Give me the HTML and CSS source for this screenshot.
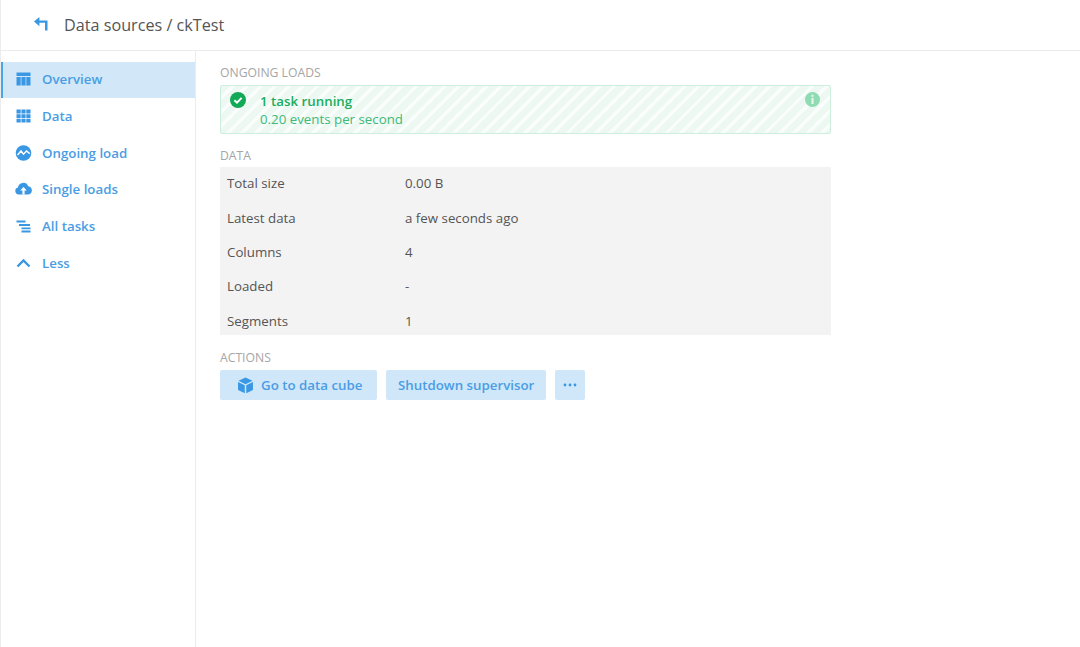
FILE: index.html
```html
<!DOCTYPE html>
<html lang="en">
<head>
<meta charset="utf-8">
<title>Data sources / ckTest</title>
<link rel="stylesheet" href="styles.css">
</head>
<body>
<div class="app">
  <header class="topbar">
    <svg class="back" viewBox="0 0 14 14" width="14" height="14"><path d="M0 4.6 5.4 0v3.5H13.5V13.5H11V5.8H5.4V9.2z" fill="#3a97e4"/></svg>
    <h1 class="crumb">Data sources / ckTest</h1>
  </header>
  <div class="body">
    <nav class="side">
      <a class="item active"><svg class="ico" viewBox="0 0 16 16"><path d="M1 1.5h14v3.5H1zM1 6h4.2v8.5H1zM5.9 6h4.2v8.5H5.9zM10.8 6H15v8.5h-4.2z"/></svg><span>Overview</span></a>
      <a class="item"><svg class="ico" viewBox="0 0 16 16"><path d="M1 1.5h4.2v4H1zM5.9 1.5h4.2v4H5.9zM10.8 1.5H15v4h-4.2zM1 6.2h4.2v3.8H1zM5.9 6.2h4.2v3.8H5.9zM10.8 6.2H15v3.8h-4.2zM1 10.7h4.2v3.8H1zM5.9 10.7h4.2v3.8H5.9zM10.8 10.7H15v3.8h-4.2z"/></svg><span>Data</span></a>
      <a class="item"><svg class="ico" viewBox="0 0 16 16"><circle cx="8" cy="8" r="7.8"/><path d="M2 10 5.5 6 8 9.2 11 6l3.2 2.6" fill="none" stroke="#fff" stroke-width="1.5"/></svg><span>Ongoing load</span></a>
      <a class="item"><svg class="ico" viewBox="0 0 17 16"><path d="M3.6 13.5a3.5 3.5 0 0 1-.6-6.9A5.3 5.3 0 0 1 13.2 5.2a4.2 4.2 0 0 1 .2 8.3z"/><path d="M8.5 6 5.2 9.6h2.2v3.9h2.2V9.6h2.2z" fill="#fff"/></svg><span>Single loads</span></a>
      <a class="item"><svg class="ico" viewBox="0 0 16 16"><path d="M1 2.5h9v2H1zM3.5 6h11v2h-11zM6 9.5h9v1.8H6zM6 12.6h9v1.8H6z"/></svg><span>All tasks</span></a>
      <a class="item"><svg class="ico" viewBox="0 0 16 16"><path d="M2 11.5 8 5.5l6 6" fill="none" stroke="#3a97e4" stroke-width="2.4"/></svg><span>Less</span></a>
    </nav>
    <main class="main">
      <section class="sec">
        <div class="label">ONGOING LOADS</div>
        <div class="status">
          <svg class="check" viewBox="0 0 16 16" width="16" height="16"><circle cx="8" cy="8" r="8" fill="#0fa958"/><path d="M4.4 8.2 7 10.7l4.6-4.8" fill="none" stroke="#fff" stroke-width="2"/></svg>
          <div class="status-text">
            <div class="st1">1 task running</div>
            <div class="st2">0.20 events per second</div>
          </div>
          <svg class="info" viewBox="0 0 16 16" width="15" height="15"><circle cx="8" cy="8" r="8" fill="#8fdcb2"/><rect x="6.9" y="3" width="2.2" height="2.2" fill="#eaf7f0"/><rect x="6.9" y="6.4" width="2.2" height="6.4" fill="#eaf7f0"/></svg>
        </div>
      </section>
      <section class="sec data">
        <div class="label">DATA</div>
        <div class="table">
          <div class="row"><span class="key">Total size</span><span>0.00 B</span></div>
          <div class="row"><span class="key">Latest data</span><span>a few seconds ago</span></div>
          <div class="row"><span class="key">Columns</span><span>4</span></div>
          <div class="row"><span class="key">Loaded</span><span>-</span></div>
          <div class="row"><span class="key">Segments</span><span>1</span></div>
        </div>
      </section>
      <section class="sec">
        <div class="label">ACTIONS</div>
        <div class="actions">
          <button class="btn cube"><svg viewBox="0 0 16 16" width="17" height="17"><path d="M8 .5 14.6 3.6 8 6.8 1.4 3.6zM1 4.8l6.3 3v7.6L1 12.2zM15 4.8l-6.3 3v7.6l6.3-3.2z" fill="#3a97e4"/></svg>Go to data cube</button>
          <button class="btn">Shutdown supervisor</button>
          <button class="btn more"><svg viewBox="0 0 14 4" width="14" height="4"><circle cx="2" cy="2" r="1.4" fill="#3a97e4"/><circle cx="7" cy="2" r="1.4" fill="#3a97e4"/><circle cx="12" cy="2" r="1.4" fill="#3a97e4"/></svg></button>
        </div>
      </section>
    </main>
  </div>
</div>
</body>
</html>
```
FILE: styles.css
```css
* { box-sizing: border-box; }
html, body { margin: 0; height: 100%; background: #fff; }
body { font-family: "Open Sans", sans-serif; font-size: 13.3px; color: #555; overflow: hidden; }
.app { height: 647px; border-left: 1px solid #ececec; display: flex; flex-direction: column; }
.topbar { height: 51px; border-bottom: 1px solid #ececec; display: flex; align-items: center; padding-left: 33px; gap: 16px; }
.back { flex: none; margin-top: -2px; }
.crumb { margin: 0; font-size: 16.2px; font-weight: 400; color: #555; }
.body { flex: 1; display: flex; }
.side { width: 195px; border-right: 1px solid #ececec; padding-top: 11px; display: flex; flex-direction: column; }
.item { height: 36.75px; display: flex; align-items: center; padding-left: 14px; gap: 10px; color: #4a9de4; font-weight: 600; font-size: 13.3px; padding-bottom: 2px; }
.item.active { background: #d2e8f8; border-left: 2px solid #4ba3e8; padding-left: 12px; height: 36px; margin-bottom: .4px; }
.ico { width: 17px; height: 16px; flex: none; fill: #3a97e4; }
.main { padding-left: 24px; width: 635px; padding-top: 14px; }
.sec { margin-bottom: 14px; }
.sec.data { margin-bottom: 15px; }
.label { font-size: 12.2px; line-height: 16px; color: #a5a5a5; margin-bottom: 4px; }
.sec.data .label { margin-bottom: 3px; }
.status { height: 49px; border: 1px solid #cdeedd; border-radius: 2px; display: flex; padding: 6px 10px 6px 9px; gap: 14px;
  background: repeating-linear-gradient(135deg, #edf8f3 0 6.5px, #f9fdfb 6.5px 10px); }
.check { flex: none; }
.status-text { flex: 1; }
.st1 { font-size: 13.3px; line-height: 18px; font-weight: 600; color: #19ad5d; }
.st2 { font-size: 13.3px; line-height: 18px; color: #3dba77; }
.info { flex: none; }
.table { background: #f3f3f3; height: 168px; padding: 2px 7px 0; display: flex; flex-direction: column; justify-content: center; }
.row { flex: none; height: 34.4px; display: flex; align-items: center; font-size: 13.3px; color: #555; }
.key { width: 178px; }
.actions { display: flex; gap: 9px; }
.btn { height: 30px; border: 0; border-radius: 2px; background: #cfe7f9; color: #4a9de4; font: 600 13.3px "Open Sans", sans-serif; padding: 0 11.5px; display: flex; align-items: center; gap: 7.5px; }
.btn.cube { padding: 0 15px 0 16.5px; }
.btn.more { padding: 0 8px; }
```
